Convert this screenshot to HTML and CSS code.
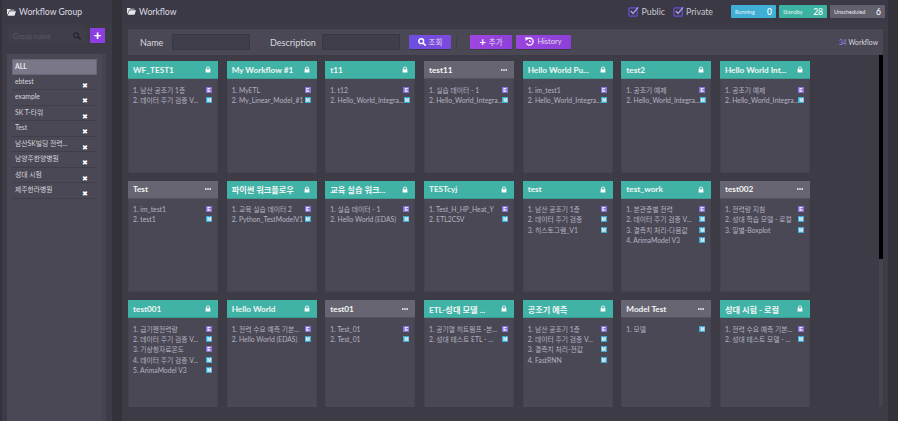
FILE: index.html
```html
<!DOCTYPE html>
<html lang="ko">

<head>
    <meta charset="UTF-8">
    <title>Workflow</title>
    <link rel="stylesheet" href="styles.css">
</head>

<body>
    <svg class="defs" width="0" height="0">
        <symbol id="folder" viewBox="0 0 12 10"><path d="M0 1h4l1 1h5v1H3L1 8H0zM3.500 4H12l-2 6H0.700z" fill="currentColor"/></symbol>
        <symbol id="lock" viewBox="0 0 10 10"><path d="M2 4.500V3a3 3 0 0 1 6 0v1.500H6.600V3a1.600 1.600 0 0 0-3.200 0v1.500zM1 4.500h8V10H1z" fill="currentColor"/></symbol>
        <symbol id="dots" viewBox="0 0 8 2"><path d="M0 0h2v2H0zM3 0h2v2H3zM6 0h2v2H6z" fill="currentColor"/></symbol>
        <symbol id="check" viewBox="0 0 12 12"><rect x="1" y="2" width="9" height="9" rx="1" fill="none" stroke="currentColor" stroke-width="1.300"/><path d="M3 5.500l2.500 2.700L11 1.500" fill="none" stroke="#a99df0" stroke-width="1.500"/></symbol>
    </svg>

    <div class="app">
        <aside class="side">
            <div class="title"><svg class="folder"><use href="#folder"/></svg>Workflow Group</div>
            <div class="side-tools">
                <div class="group-search">
                    <span>Group name</span>
                    <svg width="8" height="8" viewBox="0 0 10 10"><circle cx="4" cy="4" r="3" fill="none" stroke="#26252d" stroke-width="1.600"/><path d="M6.500 6.500L9.500 9.500" stroke="#26252d" stroke-width="1.800"/></svg>
                </div>
                <button class="plus">+</button>
            </div>
            <div class="group-panel">
                <ul class="groups">
                    <li class="on">ALL</li>
                    <li>ebtest<i>✖</i></li>
                    <li>example<i>✖</i></li>
                    <li>SK T-타워<i>✖</i></li>
                    <li>Test<i>✖</i></li>
                    <li>남산SK빌딩 전력...<i>✖</i></li>
                    <li>남양주한양병원<i>✖</i></li>
                    <li>성대 시험<i>✖</i></li>
                    <li>제주한라병원<i>✖</i></li>
                </ul>
            </div>
        </aside>

        <main class="main">
            <div class="title main-title">
                <span><svg class="folder"><use href="#folder"/></svg>Workflow</span>
                <div class="top-right">
                    <label class="chk"><svg><use href="#check"/></svg>Public</label>
                    <label class="chk chk-last"><svg><use href="#check"/></svg>Private</label>
                    <div class="stat running"><span>Running</span><b>0</b></div>
                    <div class="stat standby"><span>Standby</span><b>28</b></div>
                    <div class="stat unsched"><span>Unscheduled</span><b>6</b></div>
                </div>
            </div>

            <div class="content">
                <div class="search">
                    <label class="lbl-name">Name</label>
                    <div class="field"></div>
                    <label class="lbl-desc">Description</label>
                    <div class="field"></div>
                    <button class="btn blue"><svg width="8" height="8" viewBox="0 0 10 10"><circle cx="4" cy="4" r="3" fill="none" stroke="#fff" stroke-width="1.800"/><path d="M6.500 6.500L9.500 9.500" stroke="#fff" stroke-width="2"/></svg>조회</button>
                    <div class="sep"></div>
                    <button class="btn add"><b>+</b>추가</button>
                    <button class="btn hist"><svg width="9" height="9" viewBox="0 0 10 10"><path d="M2 2.500A4 4 0 1 1 1.500 7" fill="none" stroke="#fff" stroke-width="1.400"/><path d="M0.500 0.500L3.500 0.800 1 4zM5 3v2.500h2" fill="#fff" stroke="#fff" stroke-width=".5"/></svg>History</button>
                    <div class="count"><b>34</b> Workflow</div>
                </div>

                <div class="board">
                    <div class="cards">
                        <section class="card">
                            <h3>WF_TEST1<svg class="ico"><use href="#lock"/></svg></h3>
                            <ol>
                                <li>1. 남산 공조기 1층<em class="e">E</em></li>
                                <li>2. 데이터 주기 검증 V...<em class="m">M</em></li>
                            </ol>
                        </section>
                        <section class="card">
                            <h3>My Workflow #1<svg class="ico"><use href="#lock"/></svg></h3>
                            <ol>
                                <li>1. MyETL<em class="e">E</em></li>
                                <li>2. My_Linear_Model_#1<em class="m">M</em></li>
                            </ol>
                        </section>
                        <section class="card">
                            <h3>t11<svg class="ico"><use href="#lock"/></svg></h3>
                            <ol>
                                <li>1. t12<em class="e">E</em></li>
                                <li>2. Hello_World_Integra...<em class="m">M</em></li>
                            </ol>
                        </section>
                        <section class="card shared">
                            <h3>test11<svg class="ico dots"><use href="#dots"/></svg></h3>
                            <ol>
                                <li>1. 실습 데이터 - 1<em class="e">E</em></li>
                                <li>2. Hello_World_Integra...<em class="m">M</em></li>
                            </ol>
                        </section>
                        <section class="card">
                            <h3>Hello World Pu...<svg class="ico"><use href="#lock"/></svg></h3>
                            <ol>
                                <li>1. im_test1<em class="e">E</em></li>
                                <li>2. Hello_World_Integra...<em class="m">M</em></li>
                            </ol>
                        </section>
                        <section class="card">
                            <h3>test2<svg class="ico"><use href="#lock"/></svg></h3>
                            <ol>
                                <li>1. 공조기 예제<em class="e">E</em></li>
                                <li>2. Hello_World_Integra...<em class="m">M</em></li>
                            </ol>
                        </section>
                        <section class="card">
                            <h3>Hello World Int...<svg class="ico"><use href="#lock"/></svg></h3>
                            <ol>
                                <li>1. 공조기 예제<em class="e">E</em></li>
                                <li>2. Hello_World_Integra...<em class="m">M</em></li>
                            </ol>
                        </section>

                        <section class="card shared">
                            <h3>Test<svg class="ico dots"><use href="#dots"/></svg></h3>
                            <ol>
                                <li>1. im_test1<em class="e">E</em></li>
                                <li>2. test1<em class="m">M</em></li>
                            </ol>
                        </section>
                        <section class="card">
                            <h3>파이썬 워크플로우<svg class="ico"><use href="#lock"/></svg></h3>
                            <ol>
                                <li>1. 교육 실습 데이터 2<em class="e">E</em></li>
                                <li>2. Python_TestModelV1<em class="m">M</em></li>
                            </ol>
                        </section>
                        <section class="card">
                            <h3>교육 실습 워크...<svg class="ico"><use href="#lock"/></svg></h3>
                            <ol>
                                <li>1. 실습 데이터 - 1<em class="e">E</em></li>
                                <li>2. Hello World (EDAS)<em class="m">M</em></li>
                            </ol>
                        </section>
                        <section class="card">
                            <h3>TESTcyj<svg class="ico"><use href="#lock"/></svg></h3>
                            <ol>
                                <li>1. Test_H_HP_Heat_Y<em class="e">E</em></li>
                                <li>2. ETL2CSV<em class="m">M</em></li>
                            </ol>
                        </section>
                        <section class="card">
                            <h3>test<svg class="ico"><use href="#lock"/></svg></h3>
                            <ol>
                                <li>1. 남산 공조기 1층<em class="e">E</em></li>
                                <li>2. 데이터 주기 검증<em class="m">M</em></li>
                                <li>3. 히스토그램_V1<em class="m">M</em></li>
                            </ol>
                        </section>
                        <section class="card">
                            <h3>test_work<svg class="ico"><use href="#lock"/></svg></h3>
                            <ol>
                                <li>1. 본관층별 전력<em class="e">E</em></li>
                                <li>2. 데이터 주기 검증 V...<em class="m">M</em></li>
                                <li>3. 결측치 처리-다음값<em class="m">M</em></li>
                                <li>4. ArimaModel V3<em class="m">M</em></li>
                            </ol>
                        </section>
                        <section class="card shared">
                            <h3>test002<svg class="ico dots"><use href="#dots"/></svg></h3>
                            <ol>
                                <li>1. 전력량 지침<em class="e">E</em></li>
                                <li>2. 성대 학습 모델 - 로컬<em class="m">M</em></li>
                                <li>3. 일별-Boxplot<em class="m">M</em></li>
                            </ol>
                        </section>

                        <section class="card">
                            <h3>test001<svg class="ico"><use href="#lock"/></svg></h3>
                            <ol>
                                <li>1. 급기팬전력량<em class="e">E</em></li>
                                <li>2. 데이터 주기 검증 V...<em class="m">M</em></li>
                                <li>3. 기상청자료온도<em class="e">E</em></li>
                                <li>4. 데이터 주기 검증 V...<em class="m">M</em></li>
                                <li>5. ArimaModel V3<em class="m">M</em></li>
                            </ol>
                        </section>
                        <section class="card">
                            <h3>Hello World<svg class="ico"><use href="#lock"/></svg></h3>
                            <ol>
                                <li>1. 전력 수요 예측 기본...<em class="e">E</em></li>
                                <li>2. Hello World (EDAS)<em class="m">M</em></li>
                            </ol>
                        </section>
                        <section class="card shared">
                            <h3>test01<svg class="ico dots"><use href="#dots"/></svg></h3>
                            <ol>
                                <li>1. Test_01<em class="e">E</em></li>
                                <li>2. Test_01<em class="m">M</em></li>
                            </ol>
                        </section>
                        <section class="card">
                            <h3>ETL-성대 모델 ...<svg class="ico"><use href="#lock"/></svg></h3>
                            <ol>
                                <li>1. 공기열 히트펌프 -본...<em class="e">E</em></li>
                                <li>2. 성대 테스트 ETL - ...<em class="m">M</em></li>
                            </ol>
                        </section>
                        <section class="card">
                            <h3>공조기 예측<svg class="ico"><use href="#lock"/></svg></h3>
                            <ol>
                                <li>1. 남산 공조기 1층<em class="e">E</em></li>
                                <li>2. 데이터 주기 검증 V...<em class="m">M</em></li>
                                <li>3. 결측치 처리-전값<em class="m">M</em></li>
                                <li>4. FastRNN<em class="m">M</em></li>
                            </ol>
                        </section>
                        <section class="card shared">
                            <h3>Model Test<svg class="ico dots"><use href="#dots"/></svg></h3>
                            <ol>
                                <li>1. 모델<em class="m">M</em></li>
                            </ol>
                        </section>
                        <section class="card">
                            <h3>성대 시험 - 로컬<svg class="ico"><use href="#lock"/></svg></h3>
                            <ol>
                                <li>1. 전력 수요 예측 기본...<em class="e">E</em></li>
                                <li>2. 성대 테스트 모델 - ...<em class="m">M</em></li>
                            </ol>
                        </section>
                    </div>
                    <div class="scroll"><div class="thumb"></div></div>
                </div>
            </div>
        </main>
    </div>
</body>

</html>
```

FILE: styles.css
```css
* {
    box-sizing: border-box;
}

html,
body {
    height: 100%;
}

body {
    margin: 0;
    overflow: hidden;
    background-color: #33313a;
    color: #e4e3ea;
    font-family: Lato, "Noto Sans CJK KR", sans-serif;
    font-size: 8px;
}

.defs {
    display: block;
    height: 0;
}

.app {
    display: flex;
    height: 421px;
    padding-left: 2px;
}

.side {
    width: 110px;
    background-color: #3d3b46;
    flex: none;
}

.main {
    width: 766px;
    margin-left: 10px;
    background-color: #3d3b46;
    flex: none;
}

.title {
    height: 23px;
    padding: 0 0 0 5px;
    display: flex;
    align-items: center;
    font-size: 8.600px;
    color: #dddce3;
    background-color: #3b3945;
}

.folder {
    width: 9px;
    height: 8px;
    margin-right: 3px;
    color: #e6e5ec;
    vertical-align: -0.500px;
}

.side-tools {
    display: flex;
    gap: 4px;
    padding: 5px 0 0 6px;
}

.group-search {
    width: 78px;
    height: 15px;
    padding: 0 5px;
    background-color: #403e49;
    border-radius: 1px;
    display: flex;
    align-items: center;
    justify-content: space-between;
    color: #5b5965;
    font-size: 7px;
}

.plus {
    width: 15px;
    height: 15px;
    padding: 0;
    border: none;
    background-color: #8b3fe0;
    color: #fff;
    font: bold 13px/13px "Liberation Sans", sans-serif;
}

.group-panel {
    margin: 11px 0 0 5px;
    width: 99px;
    height: 367px;
    background-color: #4a4854;
    border-right: 4px solid #45434f;
    padding: 5px 0 0 5px;
}

.groups {
    list-style: none;
    margin: 0;
    padding: 0;
    width: 85px;
}

.groups li {
    height: 15.500px;
    padding-left: 3px;
    border-bottom: 1px solid #403e49;
    display: flex;
    justify-content: space-between;
    font-size: 6.800px;
    line-height: 13px;
    color: #d5d4dc;
}

.groups li.on {
    background-color: #7a7788;
    border: 1px solid #686672;
    padding-left: 2px;
    font-weight: bold;
    color: #e8e7ee;
}

.groups i {
    font-style: normal;
    font-size: 7px;
    line-height: 20px;
    color: #fff;
    margin-right: 9px;
}

.main-title {
    justify-content: space-between;
}

.top-right {
    display: flex;
    align-items: center;
    padding-right: 3px;
}

.chk {
    display: flex;
    align-items: center;
    gap: 2px;
    font-size: 8.800px;
    color: #c9c8d0;
    margin-right: 8px;
}

.chk svg {
    width: 11px;
    height: 11px;
    color: #6a4fd8;
}

.chk-last {
    margin-right: 18px;
}

.stat {
    height: 13px;
    margin-left: 3px;
    padding: 0 4px;
    border-radius: 1px;
    display: flex;
    align-items: center;
    justify-content: space-between;
    color: #fff;
}

.stat span {
    font-size: 5.500px;
    opacity: .85;
}

.stat b {
    font-weight: 500;
    font-size: 8.500px;
}

.running {
    width: 45px;
    margin-left: 0;
    background-color: #3fb0d4;
}

.standby {
    width: 48px;
    background-color: #3cb3a2;
}

.unsched {
    width: 55px;
    background-color: #62606d;
}

.content {
    padding: 5px 0 0 6px;
}

.search {
    width: 755px;
    height: 27px;
    display: flex;
    align-items: center;
    background-color: #4a4854;
    border-top: 1px solid #3a3843;
    color: #d9d8df;
    font-size: 9px;
}

.lbl-name {
    margin-left: 12px;
    width: 32px;
}

.lbl-desc {
    margin-left: 20px;
    width: 52px;
}

.field {
    width: 78px;
    height: 16px;
    background-color: #403e49;
    border: 1px solid #393742;
}

.btn {
    height: 15px;
    padding: 0;
    border: none;
    border-bottom: 1px solid #3a3843;
    color: #e0dfe8;
    font-family: inherit;
    font-size: 7.500px;
    display: flex;
    align-items: center;
    justify-content: center;
    gap: 3px;
}

.blue {
    width: 42px;
    margin-left: 9px;
    background: linear-gradient(90deg, #6d4fe0, #7d49dd);
}

.sep {
    width: 1px;
    height: 11px;
    margin: 0 13px 0 5px;
    background-color: #42404b;
}

.add {
    width: 42px;
    background: linear-gradient(90deg, #a045e0, #8c40d8);
}

.add b {
    font-size: 11px;
    line-height: 11px;
    color: #fff;
}

.hist {
    width: 55px;
    margin-left: 4px;
    background: linear-gradient(90deg, #9a44de, #8c40d8);
}

.count {
    margin-left: auto;
    padding-right: 5px;
    font-size: 6.800px;
}

.count b {
    color: #8c80e8;
    font-weight: 500;
}

.board {
    display: flex;
    justify-content: space-between;
    width: 755px;
    height: 352px;
    overflow: hidden;
}

.cards {
    width: 682px;
    padding-top: 6px;
    display: grid;
    grid-template-columns: repeat(7, 90px);
    grid-auto-rows: 111.500px;
    column-gap: 8.670px;
    row-gap: 8px;
}

.card {
    background-color: #4a4854;
    border: 1px solid #45434e;
    border-top: none;
}

.card h3 {
    margin: 0 -1px;
    height: 18px;
    padding: 0 7px 0 5px;
    display: flex;
    align-items: center;
    justify-content: space-between;
    background-color: #40b3a6;
    border-bottom: 1px solid #3a9c92;
    color: #f2f5f5;
    font-size: 8.200px;
    font-weight: bold;
}

.shared h3 {
    background-color: #676571;
    border-bottom-color: #55535e;
}

.ico {
    width: 6px;
    height: 7px;
    color: #fff;
    flex: none;
}

.dots {
    width: 6px;
    height: 2px;
}

.card ol {
    list-style: none;
    margin: 0;
    padding: 5.500px 5px 0 4px;
}

.card li {
    height: 10.330px;
    display: flex;
    align-items: center;
    justify-content: space-between;
    font-size: 6.800px;
    white-space: nowrap;
    color: #b4b2c2;
}

.card em {
    width: 6px;
    height: 6px;
    flex: none;
    font: bold 5px/6px "Liberation Sans", sans-serif;
    text-align: center;
    color: #fff;
}

.e {
    background-color: #8a72dc;
}

.m {
    background-color: #3fa9d0;
}

.scroll {
    width: 4px;
    background-color: #45434e;
    height: 352px;
}

.thumb {
    width: 4px;
    height: 204px;
    background-color: #000;
}
```
